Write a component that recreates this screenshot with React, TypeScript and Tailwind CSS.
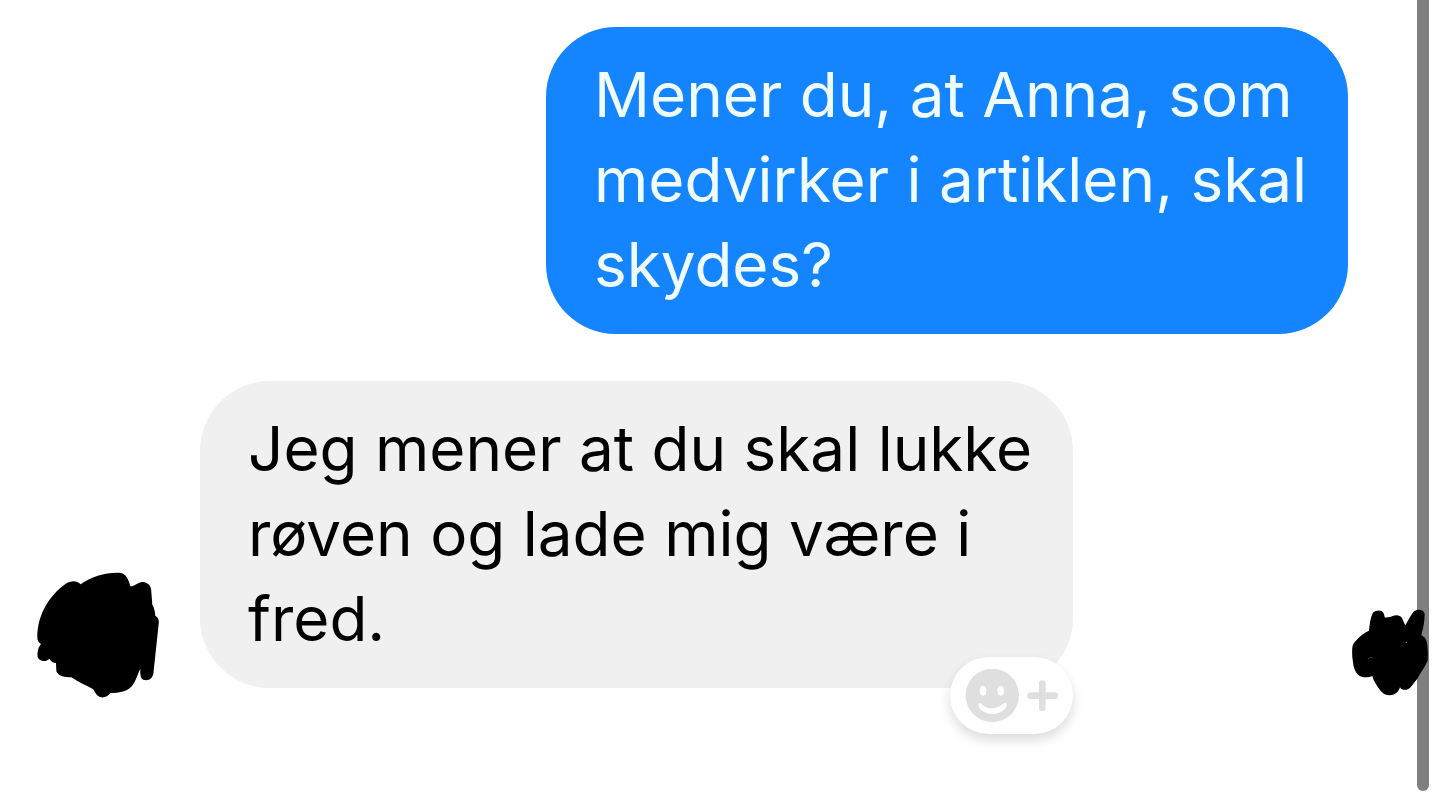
import type { ReactNode } from "react";

function Bubble({ tone, children }: { tone: "sent" | "received"; children: ReactNode }) {
  const look =
    tone === "sent"
      ? "w-[802px] bg-[#1484ff] text-[#f0fdff]"
      : "w-[873px] bg-[#f0f0f0] text-black";
  return (
    <div className={`relative shrink-0 rounded-[70px] px-12 pt-[25px] pb-[27px] ${look}`}>{children}</div>
  );
}

function MessageText({ lines }: { lines: string[] }) {
  return (
    <p className="whitespace-pre text-[62px] leading-[85px]">{lines.join("\n")}</p>
  );
}

function SenderScribble() {
  return (
    <svg className="h-[126px] w-[124px] shrink-0" viewBox="48 36 372 378" aria-hidden="true">
      <path d="M52 232C52 168 84 110 136 72C152 62 170 60 182 73C214 50 262 36 302 39C318 42 326 58 331 79C342 80 350 68 368 66C386 67 394 80 394 96L397 134C403 144 405 156 406 167C415 172 418 180 416 192L400 342C396 358 384 362 374 360C362 358 360 346 361 326C352 344 346 368 334 380C318 396 296 398 272 399C264 408 256 413 244 412C232 410 226 400 220 388C200 376 176 368 154 352C134 352 116 350 109 334L108 309C100 309 92 304 88 296C80 305 62 306 54 294C50 282 54 262 63 252C55 248 52 242 52 232Z" />
    </svg>
  );
}

function ReceiptScribble() {
  return (
    <svg
      className="absolute right-3 bottom-0.5 z-10 h-[87px] w-[76px]"
      viewBox="66 57 228 261"
      aria-hidden="true"
    >
      <path d="M67 172C68 164 72 157 80 150C90 138 102 128 117 122C119 102 121 84 128 70C136 59 158 58 162 72L164 82C170 84 182 81 186 79C196 74 210 74 216 84C220 92 222 98 226 106C234 92 242 76 252 64C262 55 282 58 284 72C284 94 280 114 274 136C286 142 290 150 292 164C294 180 294 196 293 212C284 232 272 248 262 266C252 278 244 292 234 298C224 301 214 300 210 292C206 306 194 316 178 316C160 316 150 302 140 286C134 276 128 266 127 258C114 263 96 264 84 254C74 244 70 230 69 216C66 202 66 186 67 172Z" />
      <path d="M113 207L121 202L129 204" fill="none" stroke="#555" strokeWidth="2" />
      <circle cx="229" cy="157" r="2" fill="#999" />
    </svg>
  );
}

function ReactionButton() {
  return (
    <button
      type="button"
      aria-label="Tilføj reaktion"
      className="absolute right-0 -bottom-[46px] h-[77px] w-[123px] rounded-full bg-white shadow-[0_6px_12px_rgba(0,0,0,0.14)]"
    >
      <svg className="h-full w-full" viewBox="0 0 369 231" aria-hidden="true">
        <circle cx="127" cy="115" r="80" fill="#dfdfdf" />
        <ellipse cx="99" cy="101" rx="10" ry="15" fill="#fff" />
        <ellipse cx="152" cy="101" rx="10" ry="15" fill="#fff" />
        <path
          d="M86 140C90 136 94 139 97 143C112 158 142 158 157 142C161 137 166 136 170 141C174 152 152 171 127 171C104 171 80 152 86 140Z"
          fill="#fff"
        />
        <path
          d="M277 80V152M242 116H314"
          fill="none"
          stroke="#dfdfdf"
          strokeWidth="20"
          strokeLinecap="round"
        />
      </svg>
    </button>
  );
}

export default function App() {
  return (
    <main className="relative flex min-h-screen flex-col gap-[47px] overflow-hidden bg-white pt-[27px] font-[Inter,'Liberation_Sans',sans-serif]">
      <div className="flex justify-end pr-[92px]">
        <Bubble tone="sent">
          <MessageText lines={["Mener du, at Anna, som", "medvirker i artiklen, skal", "skydes?"]} />
        </Bubble>
      </div>
      <div className="relative flex items-end gap-10 pl-9">
        <SenderScribble />
        <div className="pb-[10px]">
          <Bubble tone="received">
            <MessageText lines={["Jeg mener at du skal lukke", "røven og lade mig være i", "fred."]} />
            <ReactionButton />
          </Bubble>
        </div>
        <ReceiptScribble />
      </div>
      <div className="absolute top-0 right-[11px] bottom-[10px] w-3 rounded-b-full bg-[#808080]" />
    </main>
  );
}
